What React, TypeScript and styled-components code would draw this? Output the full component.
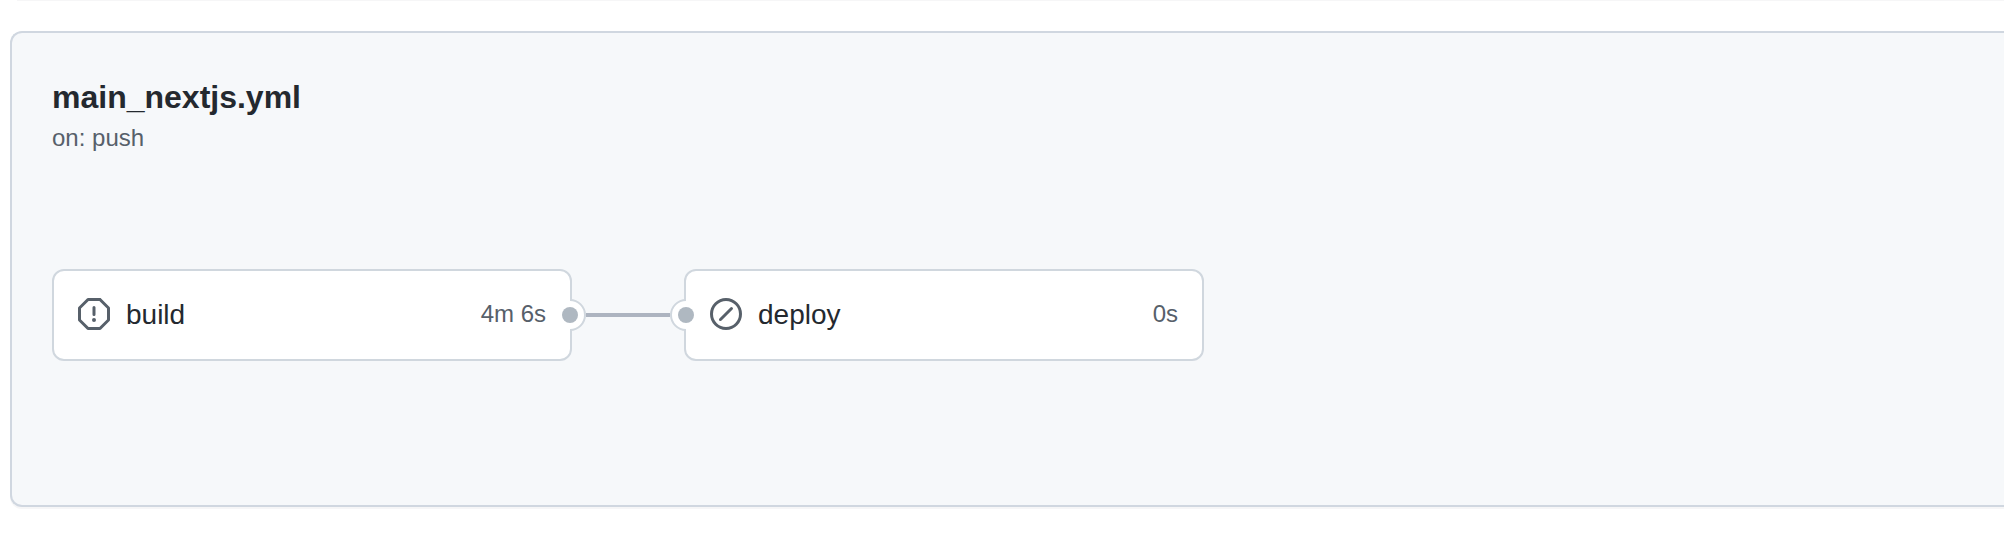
import React from 'react';
import styled, { createGlobalStyle } from 'styled-components';

const GlobalStyle = createGlobalStyle`
  *, *::before, *::after { box-sizing: border-box; }
  body {
    margin: 0;
    overflow: hidden;
    background: #ffffff;
    color: #24292f;
    font-family: 'Liberation Sans', Arial, sans-serif;
  }
`;

const Page = styled.main`
  width: 100%;
  height: 534px;
  overflow: hidden;
`;

const PreviousPanelEdge = styled.div`
  height: 1px;
  margin: 0 0 30px 17px;
  background: #f6f6f7;
`;

const Panel = styled.section`
  height: 476px;
  margin-left: 10px;
  padding: 40px;
  border: 2px solid #d0d7e0;
  border-right: 0;
  border-radius: 12px 0 0 12px;
  background: #f6f8fa;
  box-shadow: 0 2px 0 rgba(31, 35, 40, 0.04);
`;

const Title = styled.h1`
  margin: 0;
  padding-top: 2px;
  font-size: 32px;
  font-weight: 700;
  line-height: 44px;
`;

const Trigger = styled.p`
  margin: 0;
  font-size: 24px;
  line-height: 37px;
  color: #57606a;
`;

const Graph = styled.div`
  display: flex;
  align-items: center;
  margin-top: 113px;
`;

const JobCard = styled.article`
  position: relative;
  display: flex;
  align-items: center;
  width: 520px;
  height: 92px;
  padding: 0 24px 2px;
  border: 2px solid #d0d7de;
  border-radius: 12px;
  background: #ffffff;
`;

const StatusIcon = styled.svg`
  flex: none;
  width: 32px;
  height: 32px;
  margin-right: 16px;
  fill: #57606a;
`;

const JobName = styled.span`
  flex: 1;
  padding-top: 1px;
  font-size: 28px;
  line-height: 41px;
`;

const Duration = styled.span`
  padding-bottom: 1px;
  font-size: 24px;
  line-height: 35px;
  color: #57606a;
`;

const Port = styled.svg<{ $side: 'left' | 'right' }>`
  position: absolute;
  top: 28px;
  ${({ $side }) => $side}: -16px;
  width: 32px;
  height: 32px;
  transform: ${({ $side }) => ($side === 'left' ? 'scaleX(-1)' : 'none')};
`;

const Connector = styled.div`
  width: 84px;
  height: 4px;
  margin: 0 14px;
  background: #adb4c0;
`;

const STOP =
  'M4.47.22A.749.749 0 0 1 5 0h6c.199 0 .389.079.53.22l4.25 4.25c.141.14.22.331.22.53v6a.749.749 0 0 1-.22.53l-4.25 4.25A.749.749 0 0 1 11 16H5a.749.749 0 0 1-.53-.22L.22 11.53A.749.749 0 0 1 0 11V5c0-.199.079-.389.22-.53Zm.84 1.28L1.5 5.31v5.38l3.81 3.81h5.38l3.81-3.81V5.31L10.69 1.5ZM8 4a.75.75 0 0 1 .75.75v3.5a.75.75 0 0 1-1.5 0v-3.5A.75.75 0 0 1 8 4Zm0 8a1 1 0 1 1 0-2 1 1 0 0 1 0 2Z';
const SKIP =
  'M8 0a8 8 0 1 1 0 16A8 8 0 0 1 8 0ZM1.5 8a6.5 6.5 0 1 0 13 0 6.5 6.5 0 0 0-13 0Zm9.78-2.22-5.5 5.5a.749.749 0 0 1-1.275-.326.749.749 0 0 1 .215-.734l5.5-5.5a.751.751 0 0 1 1.042.018.751.751 0 0 1 .018 1.042Z';

interface JobProps {
  name: string;
  duration: string;
  icon: string;
  port: 'left' | 'right';
}

function Job({ name, duration, icon, port }: JobProps) {
  return (
    <JobCard>
      <StatusIcon viewBox="0 0 16 16" aria-hidden="true">
        <path d={icon} />
      </StatusIcon>
      <JobName>{name}</JobName>
      <Duration>{duration}</Duration>
      <Port $side={port} viewBox="0 0 32 32" aria-hidden="true">
        <circle cx="16" cy="16" r="15" fill="#ffffff" />
        <path d="M16 1a15 15 0 0 1 0 30" fill="none" stroke="#d0d7de" strokeWidth="2" />
        <circle cx="16" cy="16" r="8" fill="#afb8c1" />
      </Port>
    </JobCard>
  );
}

export default function App() {
  return (
    <>
      <GlobalStyle />
      <Page>
        <PreviousPanelEdge />
        <Panel>
          <Title>main_nextjs.yml</Title>
          <Trigger>on: push</Trigger>
          <Graph>
            <Job name="build" duration="4m 6s" icon={STOP} port="right" />
            <Connector />
            <Job name="deploy" duration="0s" icon={SKIP} port="left" />
          </Graph>
        </Panel>
      </Page>
    </>
  );
}
